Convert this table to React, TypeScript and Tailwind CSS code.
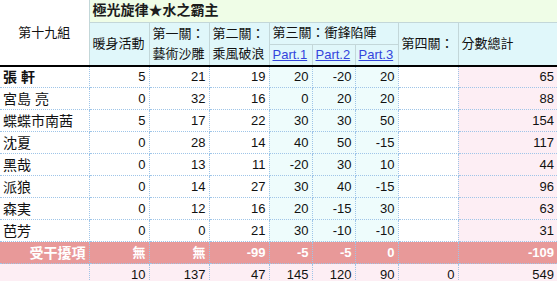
const font = { fontFamily: '"Liberation Sans", "Noto Sans CJK TC", sans-serif' }

type Row = { name: string; bold?: boolean; v: (number | null)[]; total: number }

const rows: Row[] = [
  { name: "張 軒", bold: true, v: [5, 21, 19, 20, -20, 20, null], total: 65 },
  { name: "宮島 亮", v: [0, 32, 16, 0, 20, 20, null], total: 88 },
  { name: "蝶蝶市南茜", v: [5, 17, 22, 30, 30, 50, null], total: 154 },
  { name: "沈夏", v: [0, 28, 14, 40, 50, -15, null], total: 117 },
  { name: "黑哉", v: [0, 13, 11, -20, 30, 10, null], total: 44 },
  { name: "派狼", v: [0, 14, 27, 30, 40, -15, null], total: 96 },
  { name: "森実", v: [0, 12, 16, 20, -15, 30, null], total: 63 },
  { name: "芭芳", v: [0, 0, 21, 30, -10, -10, null], total: 31 },
]

const penalty = ["無", "無", "-99", "-5", "-5", "0", "", "-109"]
const sums = ["10", "137", "47", "145", "120", "90", "0", "549"]

const td = "border-r border-b border-dotted border-[#9fc5e8] h-[22px] px-[3px] align-middle leading-none"
const th = "border-r border-b border-solid border-[#c3d7d9] bg-[#e0f7fa] font-normal text-left px-[3px] align-middle leading-[20px]"

export default function App() {
  return (
    <div className="w-[557px] h-[281px] overflow-hidden bg-white text-[13px] text-[#111]" style={font}>
      <table className="table-fixed border-collapse w-[557px]">
        <colgroup>
          <col className="w-[89px]" />
          <col className="w-[60px]" />
          <col className="w-[60px]" />
          <col className="w-[60px]" />
          <col className="w-[43px]" />
          <col className="w-[43px]" />
          <col className="w-[43px]" />
          <col className="w-[60px]" />
          <col className="w-[99px]" />
        </colgroup>
        <thead>
          <tr className="h-[22px]">
            <th rowSpan={3} className="border-r border-b-2 border-solid border-r-[#c3d7d9] border-b-black bg-white font-normal text-center align-middle">
              第十九組
            </th>
            <th colSpan={8} className="border-b border-solid border-[#c3d7d9] bg-[#effde7] text-left px-[3px] font-bold text-[14px] text-[#1c1c1c]">
              極光旋律★水之霸主
            </th>
          </tr>
          <tr className="h-[22px]">
            <th rowSpan={2} className={`${th} border-b-2 border-b-black`}>暖身活動</th>
            <th rowSpan={2} className={`${th} border-b-2 border-b-black`}>
              第一關：<br />藝術沙雕
            </th>
            <th rowSpan={2} className={`${th} border-b-2 border-b-black`}>
              第二關：<br />乘風破浪
            </th>
            <th colSpan={3} className={th}>第三關：衝鋒陷陣</th>
            <th rowSpan={2} className={`${th} border-b-2 border-b-black`}>第四關：</th>
            <th rowSpan={2} className={`${th} border-b-2 border-b-black border-r-0`}>分數總計</th>
          </tr>
          <tr className="h-[21px]">
            {["Part.1", "Part.2", "Part.3"].map((p) => (
              <th key={p} className={`${th} border-b-2 border-b-black`}>
                <span className="text-[#3344dd] underline">{p}</span>
              </th>
            ))}
          </tr>
        </thead>
        <tbody>
          {rows.map((r) => (
            <tr key={r.name}>
              <td className={`${td} text-left text-[14px] ${r.bold ? "font-bold" : ""}`}>{r.name}</td>
              {r.v.map((n, i) => (
                <td
                  key={i}
                  className={`${td} text-right ${i >= 3 && i <= 5 ? "bg-[#eefcfc]" : "bg-white"}`}
                >
                  {n ?? ""}
                </td>
              ))}
              <td className={`${td} text-right bg-[#fdeef4] border-r-0`}>{r.total}</td>
            </tr>
          ))}
          <tr className="bg-[#e89999] text-white font-bold">
            <td className={`${td} text-right text-[14px]`}>受干擾項</td>
            {penalty.map((p, i) => (
              <td key={i} className={`${td} text-right ${i === 7 ? "border-r-0" : ""}`}>
                {p}
              </td>
            ))}
          </tr>
          <tr className="bg-[#fdeef4]">
            <td className={td}></td>
            {sums.map((s, i) => (
              <td key={i} className={`${td} text-right ${i === 7 ? "border-r-0" : ""}`}>
                {s}
              </td>
            ))}
          </tr>
        </tbody>
      </table>
    </div>
  )
}
